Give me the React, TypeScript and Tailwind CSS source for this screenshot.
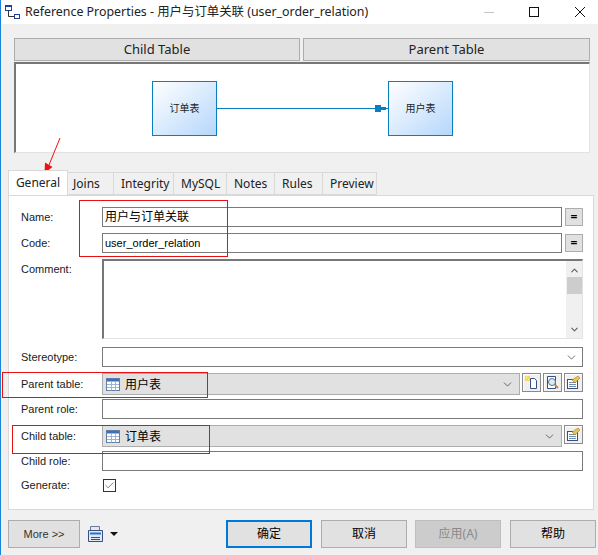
import type { ReactNode } from 'react';
import { ChevronDown, Check } from 'lucide-react';

const tabs = [
  { name: 'Joins', w: 'w-[46px] pl-[5px]' },
  { name: 'Integrity', w: 'w-[60px] pl-[7px]' },
  { name: 'MySQL', w: 'w-[53px] pl-[7px]' },
  { name: 'Notes', w: 'w-[48px] pl-[7px]' },
  { name: 'Rules', w: 'w-[48px] pl-[7px]' },
  { name: 'Preview', w: 'w-[54px] pl-[7px]' },
];

function TableIcon() {
  return (
    <svg width="14" height="13" viewBox="0 0 14 13" className="shrink-0">
      <rect x="0.5" y="0.5" width="13" height="12" fill="#fff" stroke="#5f7fa8" />
      <rect x="1" y="1" width="12" height="2.5" fill="#3f6fb5" />
      <path d="M1 6.5h12M1 9.5h12M5.5 3.5v9M9.5 3.5v9" stroke="#9db4d2" />
    </svg>
  );
}

function NewIcon() {
  return (
    <svg width="15" height="15" viewBox="0 0 15 15">
      <path d="M6.5 3.5h4l2 2v8h-6z" fill="#fff" stroke="#33507f" />
      <rect x="1" y="1" width="5" height="5" fill="#f5d76a" />
      <path d="M2 2h1v1H2zM4 4h1v1H4z" fill="#fff" />
    </svg>
  );
}

function SearchIcon() {
  return (
    <svg width="15" height="15" viewBox="0 0 15 15">
      <path d="M2.5 1.5h8v12h-8z" fill="#fff" stroke="#33507f" />
      <circle cx="7" cy="7" r="3.5" fill="#dfeaf5" stroke="#59718f" />
      <path d="M10 10l3 3" stroke="#d9822b" strokeWidth="2" />
    </svg>
  );
}

function PropsIcon() {
  return (
    <svg width="15" height="15" viewBox="0 0 15 15">
      <rect x="1.5" y="4.5" width="10" height="9" fill="#fff" stroke="#33507f" />
      <path d="M3 7.5h7M3 9.5h7M3 11.5h7" stroke="#6f8db5" />
      <path d="M6 5l6-4 2 2-5 5z" fill="#eec24f" stroke="#8a6d1f" strokeWidth="0.5" />
    </svg>
  );
}

function IconButton({ children }: { children: ReactNode }) {
  return (
    <button className="flex h-[19px] w-[19px] shrink-0 items-center justify-center border border-[#8a8a8a] bg-[#f0f0f0] shadow-[inset_1px_1px_0_#fff]">
      {children}
    </button>
  );
}

function EqButton() {
  return (
    <button className="flex h-[18px] w-[18px] shrink-0 items-center justify-center border border-[#adadad] bg-[#e1e1e1] text-[12px] font-bold leading-none text-black">
      =
    </button>
  );
}

function Field({ label, top, children }: { label: string; top: string; children: ReactNode }) {
  return (
    <div className={`flex items-center ${top}`}>
      <span className="w-[81px] shrink-0 font-['Liberation_Sans',sans-serif] text-[11px] text-[#1a1a1a]">{label}</span>
      {children}
    </div>
  );
}

function TableSelect({ name, width }: { name: string; width: string }) {
  return (
    <div className={`flex h-[22px] items-center border border-[#adadad] bg-[#e1e1e1] pl-[3px] pr-[5px] ${width}`}>
      <TableIcon />
      <span className="ml-[5px] flex-1 pt-[2px] text-[12px] text-black">{name}</span>
      <ChevronDown size={13} strokeWidth={1.3} className="text-[#333]" />
    </div>
  );
}

function DialogButton({ label, disabled }: { label: string; disabled?: boolean }) {
  return (
    <button
      className={`h-[28px] w-[86px] shrink-0 border text-[12px] ${
        disabled ? 'border-[#bfbfbf] bg-[#cccccc] text-[#8a8a8a]' : 'border-[#adadad] bg-[#e1e1e1] text-black'
      }`}
    >
      {label}
    </button>
  );
}

export default function App() {
  return (
    <div className="relative h-[555px] w-[598px] overflow-hidden border-l border-[#1883d7] bg-[#f0f0f0] font-['Noto_Sans','Noto_Sans_CJK_SC',sans-serif]">
      {/* title bar */}
      <div className="flex h-6 items-center bg-white pl-[3px] text-[12.4px] text-[#222]">
        <svg width="16" height="16" viewBox="0 0 16 16" className="shrink-0">
          <rect x="1.5" y="1.5" width="6" height="5" fill="#fff" stroke="#1f3fa8" />
          <rect x="1.5" y="1.5" width="6" height="1.5" fill="#1f3fa8" />
          <rect x="10.5" y="10.5" width="5" height="4" fill="#fff" stroke="#1f3fa8" />
          <path d="M4.5 6.5v6h6" fill="none" stroke="#333" />
        </svg>
        <span className="ml-[5px] flex-1">Reference Properties - 用户与订单关联 (user_order_relation)</span>
        <svg width="10" height="10" viewBox="0 0 10 10" className="mr-[35px] shrink-0">
          <path d="M0 5.5h10" stroke="#c4c4c4" />
        </svg>
        <svg width="10" height="10" viewBox="0 0 10 10" className="mr-[36px] shrink-0">
          <rect x="0.5" y="0.5" width="9" height="9" fill="none" stroke="#111" />
        </svg>
        <svg width="10" height="10" viewBox="0 0 10 10" className="mr-[13px] shrink-0">
          <path d="M0 0l10 10M10 0L0 10" stroke="#111" />
        </svg>
      </div>

      {/* child / parent header */}
      <div className="ml-[13px] mt-[14px] flex w-[576px] gap-[3px]">
        <div className="flex h-[23px] w-[286px] items-center justify-center border border-[#adadad] bg-[#e1e1e1] text-[13px] text-[#222]">
          Child Table
        </div>
        <div className="flex h-[23px] w-[287px] items-center justify-center border border-[#adadad] bg-[#e1e1e1] text-[13px] text-[#222]">
          Parent Table
        </div>
      </div>

      {/* preview */}
      <div className="ml-[13px] mt-px flex h-[91px] w-[576px] items-center border-b border-l-2 border-r border-t-2 border-b-[#e3e3e3] border-l-[#777] border-r-[#e3e3e3] border-t-[#777] bg-white pl-[136px]">
        <div className="flex h-[55px] w-[65px] shrink-0 items-center justify-center border border-[#0a7fc0] bg-linear-to-br from-white to-[#b5d7fb] text-[10px] text-[#222]">
          订单表
        </div>
        <svg width="171" height="11" viewBox="0 0 171 11" className="shrink-0">
          <path d="M0 5.5h171" stroke="#0a7fc0" />
          <path d="M158 2h6v2h5v3h-5v2h-6z" fill="#0a7fc0" />
        </svg>
        <div className="flex h-[55px] w-[65px] shrink-0 items-center justify-center border border-[#0a7fc0] bg-linear-to-br from-white to-[#b5d7fb] text-[10px] text-[#222]">
          用户表
        </div>
      </div>

      {/* tabs */}
      <div className="relative z-10 ml-[7px] mt-[18px] flex h-[24px] items-end text-[12px] text-[#222]">
        <div className="flex h-[25px] w-[60px] items-center justify-center border border-b-0 border-[#d9d9d9] bg-white pb-px">
          General
        </div>
        {tabs.map((tab) => (
          <div
            key={tab.name}
            className={`flex h-[23px] items-center border border-l-0 border-[#d9d9d9] bg-[#f0f0f0] pt-px ${tab.w}`}
          >
            {tab.name}
          </div>
        ))}
      </div>

      {/* general panel */}
      <div className="ml-[7px] h-[315px] w-[586px] border border-[#d9d9d9] bg-white pl-[12px] pt-[11px]">
        <Field label="Name:" top="">
          <div className="flex h-[20px] w-[460px] items-center border border-[#7a7a7a] pl-[2px] text-[12px] text-black">
            用户与订单关联
          </div>
          <div className="ml-[3px]">
            <EqButton />
          </div>
        </Field>
        <Field label="Code:" top="mt-[6px]">
          <div className="flex h-[20px] w-[460px] items-center border border-[#7a7a7a] pl-[2px] font-['Liberation_Sans',sans-serif] text-[11px] text-black">
            user_order_relation
          </div>
          <div className="ml-[3px]">
            <EqButton />
          </div>
        </Field>

        <div className="mt-[6px] flex">
          <span className="w-[81px] shrink-0 font-['Liberation_Sans',sans-serif] text-[11px] leading-[20px] text-[#1a1a1a]">Comment:</span>
          <div className="flex h-[80px] w-[481px] justify-end border-b border-l-2 border-r border-t-2 border-b-[#e3e3e3] border-l-[#777] border-r-[#e3e3e3] border-t-[#777] bg-white">
            <div className="flex w-[16px] flex-col items-center bg-[#f0f0f0]">
              <ChevronDown size={11} strokeWidth={2.4} className="mt-[4px] rotate-180 text-[#606060]" />
              <div className="mt-px h-[17px] w-[15px] bg-[#cdcdcd]" />
              <ChevronDown size={11} strokeWidth={2.4} className="mt-auto mb-[3px] text-[#606060]" />
            </div>
          </div>
        </div>

        <Field label="Stereotype:" top="mt-[8px]">
          <div className="flex h-[20px] w-[481px] items-center justify-end border border-[#7a7a7a] pr-[4px]">
            <ChevronDown size={13} strokeWidth={1.3} className="text-[#333]" />
          </div>
        </Field>

        <Field label="Parent table:" top="mt-[6px]">
          <TableSelect name="用户表" width="w-[418px]" />
          <div className="ml-[2px] flex gap-[2px] self-start">
            <IconButton>
              <NewIcon />
            </IconButton>
            <IconButton>
              <SearchIcon />
            </IconButton>
            <IconButton>
              <PropsIcon />
            </IconButton>
          </div>
        </Field>

        <Field label="Parent role:" top="mt-[4px]">
          <div className="h-[20px] w-[481px] border border-[#7a7a7a]" />
        </Field>

        <Field label="Child table:" top="mt-[6px]">
          <TableSelect name="订单表" width="w-[460px]" />
          <div className="ml-[2px] self-start">
            <IconButton>
              <PropsIcon />
            </IconButton>
          </div>
        </Field>

        <Field label="Child role:" top="mt-[4px]">
          <div className="h-[20px] w-[481px] border border-[#7a7a7a]" />
        </Field>

        <Field label="Generate:" top="mt-[6px]">
          <div className="ml-px flex h-[13px] w-[13px] items-center justify-center border border-[#333] bg-white">
            <Check size={11} strokeWidth={1.5} className="text-[#444]" />
          </div>
        </Field>
      </div>

      {/* bottom buttons */}
      <div className="ml-[7px] mt-[10px] flex items-center">
        <button className="h-[28px] w-[72px] shrink-0 border border-[#adadad] bg-[#e1e1e1] font-['Liberation_Sans',sans-serif] text-[11px] text-[#333]">More &gt;&gt;</button>
        <svg width="15" height="16" viewBox="0 0 15 16" className="ml-[8px] shrink-0">
          <path d="M2.5 .5h9v4h-9z" fill="#e8e8e8" stroke="#6a7a96" />
          <path d="M.5 4.5h14v11H.5z" fill="#dfe8f7" stroke="#35507f" />
          <path d="M2 7.5h11" stroke="#2f6bd0" strokeWidth="2" />
          <path d="M3 11.5h9M3 13.5h9" stroke="#35507f" />
        </svg>
        <svg width="8" height="4" viewBox="0 0 8 4" className="ml-[7px] shrink-0">
          <path d="M0 0h8L4 4z" fill="#111" />
        </svg>
        <button className="ml-[108px] h-[28px] w-[86px] shrink-0 border-2 border-[#0078d7] bg-[#e1e1e1] text-[12px] text-black">确定</button>
        <div className="ml-[9px]">
          <DialogButton label="取消" />
        </div>
        <div className="ml-[8px]">
          <DialogButton label="应用(A)" disabled />
        </div>
        <div className="ml-[9px]">
          <DialogButton label="帮助" />
        </div>
      </div>

      {/* red annotations on top of the shot */}
      <div className="absolute left-[78px] top-[200px] h-[57px] w-[149px] border border-[#e81010]" />
      <div className="absolute left-[1px] top-[372px] h-[26px] w-[206px] border border-[#e81010]" />
      <div className="absolute left-[11px] top-[425px] h-[29px] w-[198px] border border-[#e81010]" />
      <svg width="24" height="42" viewBox="0 0 24 42" className="absolute left-[37px] top-[136px]">
        <path d="M22 2L11 29" stroke="#f01010" />
        <path d="M6.5 37L7 26.5 14.5 31z" fill="#f01010" />
      </svg>
    </div>
  );
}
